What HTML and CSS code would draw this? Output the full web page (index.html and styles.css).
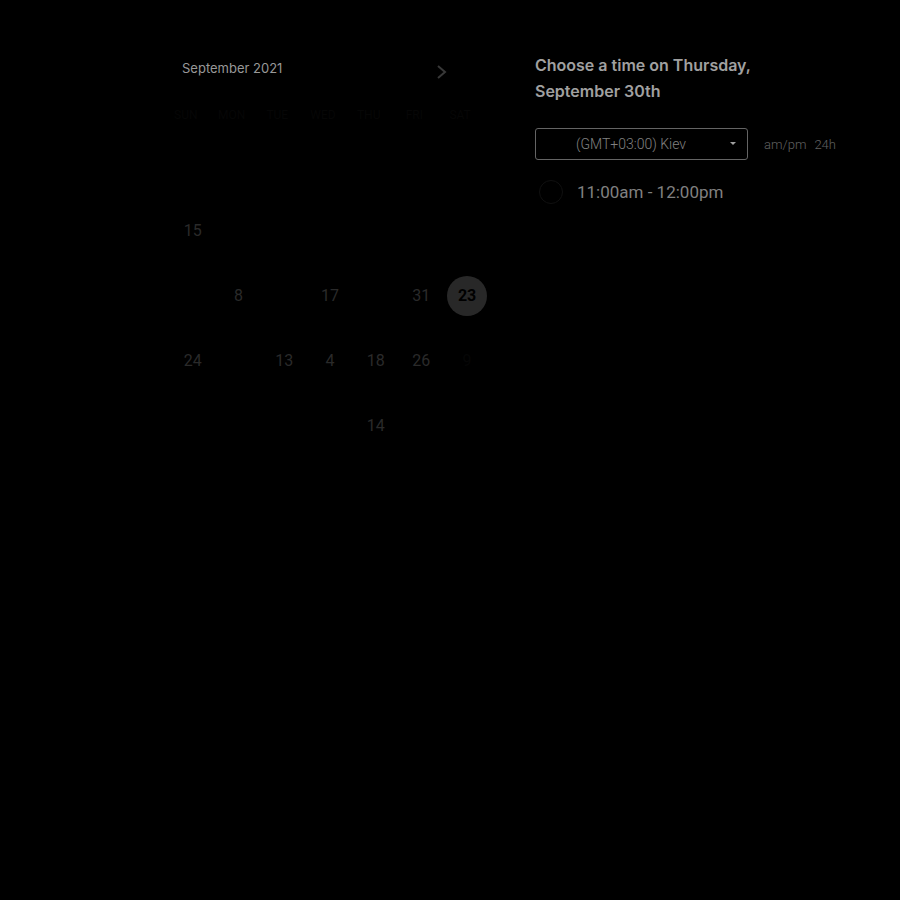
FILE: index.html
```html
<!DOCTYPE html>
<html lang="en">
<head>
<meta charset="utf-8">
<meta name="viewport" content="width=device-width, initial-scale=1">
<title>Choose a time</title>
<link rel="stylesheet" href="styles.css">
</head>
<body>
<main class="scheduler">
  <section class="calendar" aria-label="Calendar">
    <header class="calendar-head">
      <h2 class="month">September 2021</h2>
      <button class="next" type="button" aria-label="Next month">
        <svg width="10" height="14" viewBox="0 0 10 14" fill="none" stroke="currentColor" stroke-width="2"><path d="M1 1l7 6-7 6"/></svg>
      </button>
    </header>
    <table class="days">
      <thead>
        <tr><th>SUN</th><th>MON</th><th>TUE</th><th>WED</th><th>THU</th><th>FRI</th><th>SAT</th></tr>
      </thead>
      <tbody>
        <tr><td></td><td></td><td></td><td></td><td></td><td></td><td></td></tr>
        <tr><td><button class="day" type="button">15</button></td><td></td><td></td><td></td><td></td><td></td><td></td></tr>
        <tr><td></td><td><button class="day" type="button">8</button></td><td></td><td><button class="day" type="button">17</button></td><td></td><td><button class="day" type="button">31</button></td><td><button class="day selected" type="button">23</button></td></tr>
        <tr><td><button class="day" type="button">24</button></td><td></td><td><button class="day" type="button">13</button></td><td><button class="day" type="button">4</button></td><td><button class="day" type="button">18</button></td><td><button class="day" type="button">26</button></td><td><button class="day faint" type="button">9</button></td></tr>
        <tr><td></td><td></td><td></td><td></td><td><button class="day" type="button">14</button></td><td></td><td></td></tr>
      </tbody>
    </table>
  </section>
  <section class="times">
    <h1 class="title">Choose a time on Thursday, September 30th</h1>
    <div class="zone-row">
      <div class="zone">
        <select class="zone-select" aria-label="Time zone"><option>(GMT+03:00) Kiev</option></select>
        <svg class="caret" width="6" height="3" viewBox="0 0 6 3" fill="currentColor"><path d="M0 0h6L3 3z"/></svg>
      </div>
      <div class="formats">
        <button class="format" type="button">am/pm</button>
        <button class="format" type="button">24h</button>
      </div>
    </div>
    <label class="slot"><input class="slot-radio" type="radio" name="slot">11:00am - 12:00pm</label>
  </section>
</main>
</body>
</html>
```
FILE: styles.css
```css
* {
  box-sizing: border-box;
}

body {
  margin: 0;
  min-height: 100vh;
  background: #000;
  color: #a0a0a0;
  font-family: Roboto, "Liberation Sans", sans-serif;
}

button,
select {
  margin: 0;
  padding: 0;
  border: 0;
  background: none;
  color: inherit;
  font: inherit;
}

.scheduler {
  display: grid;
  grid-template-columns: 320px minmax(0, 320px);
  gap: 45px;
  padding: 52px 20px 40px 170px;
}

.calendar-head {
  display: flex;
  justify-content: space-between;
  padding: 8px 43px 0 12px;
}

.month {
  margin: 0;
  color: #989898;
  font: 400 13px/16px Inter, sans-serif;
}

.next {
  display: flex;
  margin-top: 5px;
  color: #383838;
}

.days {
  width: 100%;
  margin-top: 21px;
  border-collapse: collapse;
  table-layout: fixed;
}

.days th {
  height: 33px;
  padding: 0 14px 3px 0;
  color: #060606;
  font-size: 12px;
  font-weight: 400;
}

.days td {
  height: 65px;
  padding: 0;
  text-align: center;
}

.day {
  width: 40px;
  height: 40px;
  border-radius: 50%;
  color: #2a2a2a;
  font-size: 16px;
}

.selected {
  background: #282828;
  color: #000;
  font-weight: 700;
}

.faint {
  color: #060606;
}

.title {
  max-width: 240px;
  margin: 0;
  color: #a0a0a0;
  font: 600 16px/26px Inter, sans-serif;
}

.zone-row {
  display: flex;
  align-items: center;
  gap: 16px;
  margin-top: 24px;
}

.zone {
  position: relative;
  width: 213px;
}

.zone-select {
  display: block;
  width: 100%;
  height: 32px;
  padding-left: 40px;
  border: 1px solid #646464;
  border-radius: 3px;
  appearance: none;
  color: #808080;
  font-size: 14px;
  font-weight: 300;
}

.caret {
  position: absolute;
  top: 14px;
  right: 12px;
  color: #a0a0a0;
  pointer-events: none;
}

.formats {
  display: flex;
  gap: 8px;
  color: #606060;
  font-size: 13px;
  font-weight: 300;
}

.slot {
  display: flex;
  align-items: center;
  gap: 14px;
  margin-top: 20px;
  padding-left: 4px;
  color: #808080;
  font-size: 17px;
}

.slot-radio {
  width: 24px;
  height: 24px;
  margin: 0;
  border: 1px solid #101010;
  border-radius: 50%;
  appearance: none;
}
```
